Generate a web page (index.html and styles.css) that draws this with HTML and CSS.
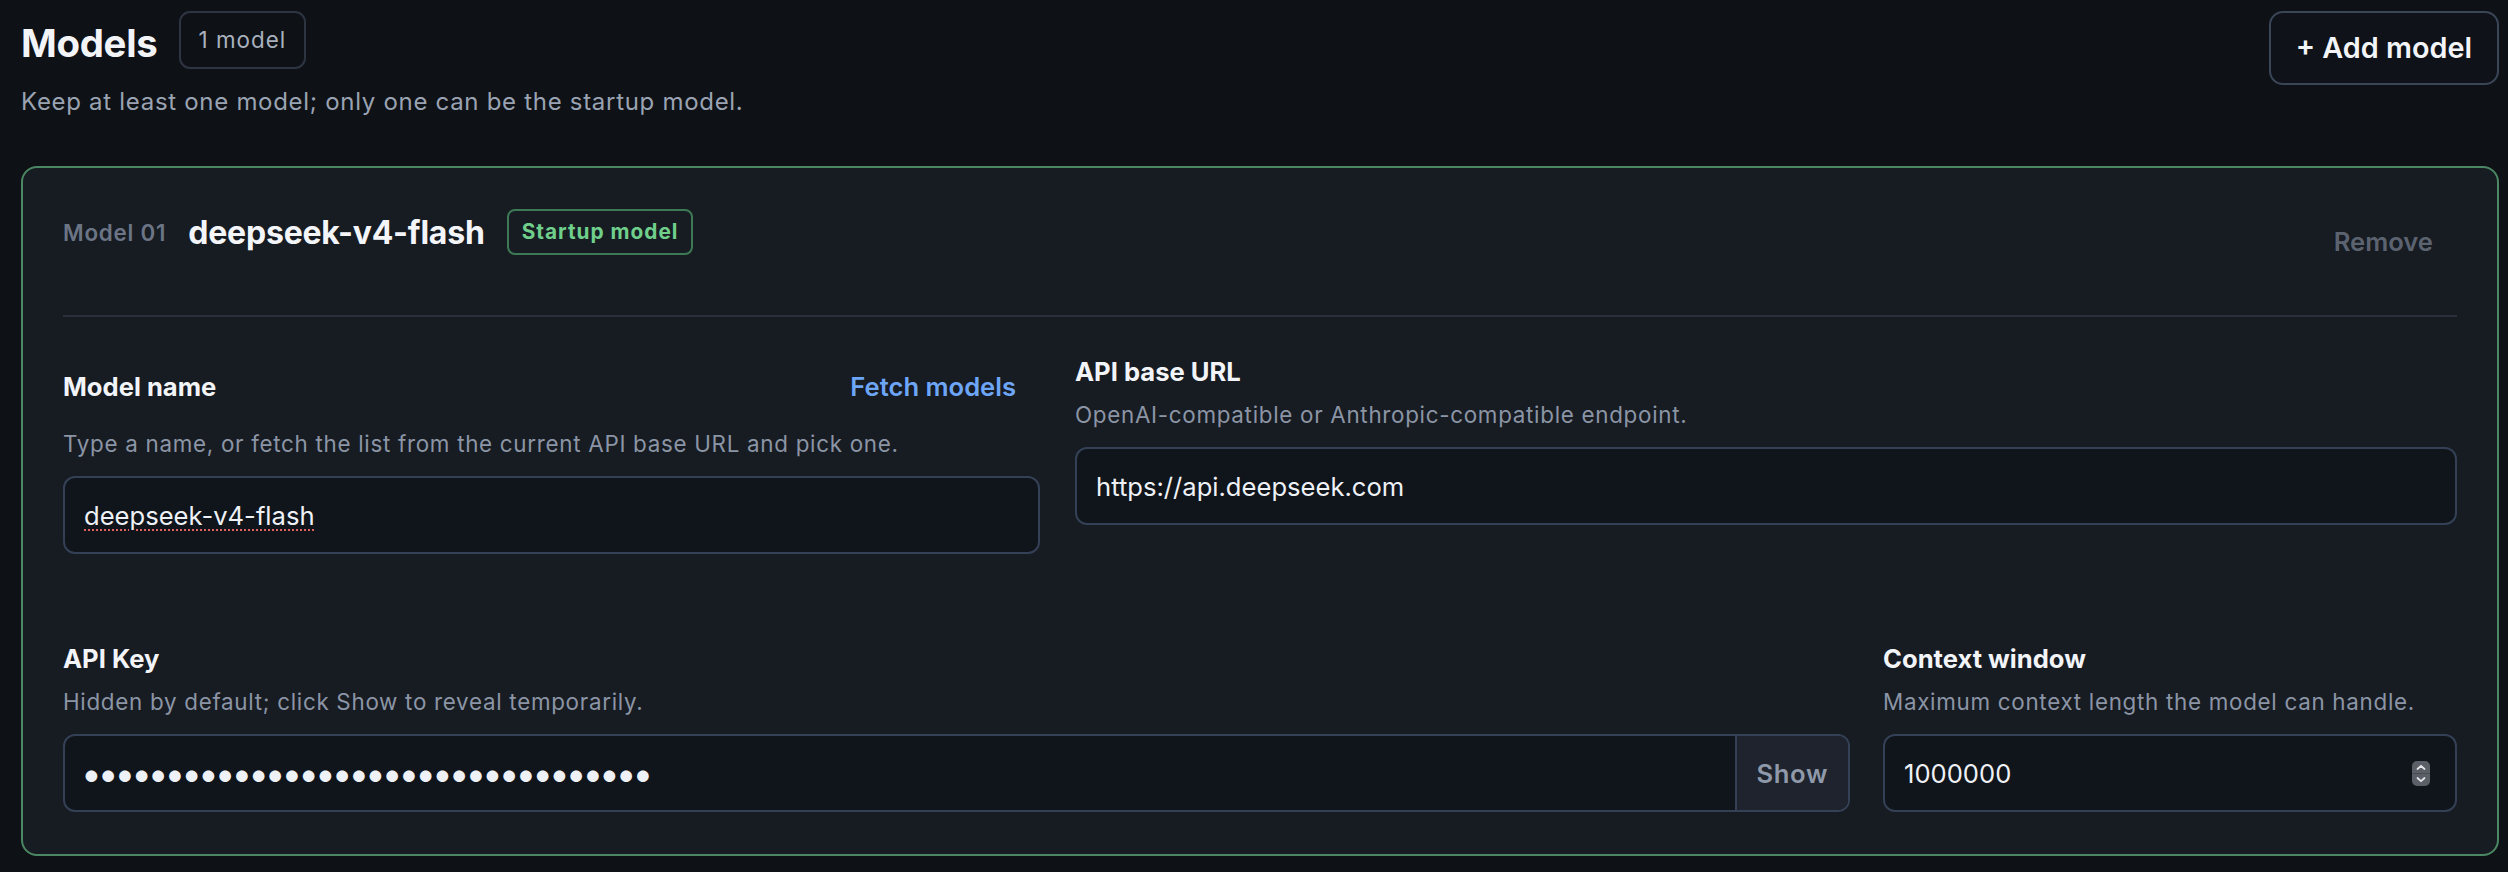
FILE: index.html
```html
<!DOCTYPE html>
<html lang="en">
<head>
    <meta charset="UTF-8">
    <meta name="viewport" content="width=device-width, initial-scale=1.0">
    <title>Models</title>
    <link rel="stylesheet" href="styles.css">
</head>
<body>
    <header class="page-head">
        <div>
            <div class="title-row">
                <h1 class="page-title">Models</h1>
                <span class="count">1 model</span>
            </div>
            <p class="subtitle">Keep at least one model; only one can be the startup model.</p>
        </div>
        <button class="btn-add" type="button">+ Add model</button>
    </header>

    <section class="card">
        <div class="card-head">
            <div class="card-title">
                <span class="card-index">Model 01</span>
                <h2 class="model-name">deepseek-v4-flash</h2>
                <span class="startup">Startup model</span>
            </div>
            <button class="btn-remove" type="button">Remove</button>
        </div>

        <div class="grid grid-top">
            <div class="field">
                <div class="label-row">
                    <label class="label">Model name</label>
                    <button class="btn-fetch" type="button">Fetch models</button>
                </div>
                <p class="help">Type a name, or fetch the list from the current API base URL and pick one.</p>
                <input class="input spelled" type="text" value="deepseek-v4-flash">
            </div>
            <div class="field">
                <label class="label">API base URL</label>
                <p class="help">OpenAI-compatible or Anthropic-compatible endpoint.</p>
                <input class="input" type="text" value="https://api.deepseek.com">
            </div>
        </div>

        <div class="grid grid-bottom">
            <div class="field">
                <label class="label">API Key</label>
                <p class="help">Hidden by default; click Show to reveal temporarily.</p>
                <div class="input-group">
                    <input class="input-bare secret" type="password" value="sk-0000000000000000000000000000000">
                    <button class="btn-show" type="button">Show</button>
                </div>
            </div>
            <div class="field">
                <label class="label">Context window</label>
                <p class="help">Maximum context length the model can handle.</p>
                <div class="input-group num">
                    <input class="input-bare" type="number" value="1000000">
                    <span class="stepper">
                        <svg width="18" height="25" viewBox="0 0 18 25">
                            <rect x="0" y="0" width="18" height="25" rx="5" fill="#5b5f67"/>
                            <line x1="0" y1="12.5" x2="18" y2="12.5" stroke="#484c53" stroke-width="1"/>
                            <path d="M5.5 8 L9 4.8 L12.5 8" fill="none" stroke="#e4e6ea" stroke-width="1.8" stroke-linecap="round" stroke-linejoin="round"/>
                            <path d="M5.5 17 L9 20.2 L12.5 17" fill="none" stroke="#e4e6ea" stroke-width="1.8" stroke-linecap="round" stroke-linejoin="round"/>
                        </svg>
                    </span>
                </div>
            </div>
        </div>
    </section>
</body>
</html>
```

FILE: styles.css
```css
* {
    margin: 0;
    padding: 0;
    box-sizing: border-box;
}
body {
    font-family: Inter, "Noto Sans", sans-serif;
    background-color: #0e1116;
    color: #eef1f6;
    padding: 11px 9px 0 21px;
}
button, input {
    font-family: inherit;
}

.page-head {
    display: flex;
    justify-content: space-between;
    align-items: flex-start;
}
.title-row {
    display: flex;
    align-items: flex-start;
    gap: 21px;
}
.page-title {
    font-size: 38.4px;
    line-height: 64px;
    font-weight: 700;
    color: #f2f4f8;
    letter-spacing: -0.3px;
}
.count {
    border: 2px solid #2e3542;
    border-radius: 11px;
    padding: 0 18px;
    line-height: 54px;
    font-size: 22.4px;
    letter-spacing: 1px;
    color: #a9b1be;
}
.subtitle {
    margin-top: 9px;
    font-size: 24px;
    line-height: 36px;
    letter-spacing: 0.7px;
    color: #9aa3b2;
}
.btn-add {
    background: #0f1218;
    border: 2px solid #3a4558;
    border-radius: 14px;
    color: #f2f4f8;
    font-size: 28.8px;
    font-weight: 600;
    line-height: 70px;
    padding: 0 25px;
}

.card {
    margin-top: 46px;
    background-color: #171b22;
    border: 2px solid #4a8762;
    border-radius: 16px;
    padding: 41px 40px 42px 40px;
}
.card-head {
    display: flex;
    justify-content: space-between;
    align-items: flex-start;
    padding-bottom: 40px;
    border-bottom: 2px solid #2a303a;
}
.card-title {
    display: flex;
    align-items: center;
    gap: 22px;
    height: 46px;
}
.card-index {
    font-size: 22.4px;
    font-weight: 600;
    letter-spacing: 0.75px;
    color: #6b7585;
}
.model-name {
    font-size: 32px;
    font-weight: 700;
    color: #f3f5f9;
    letter-spacing: -0.2px;
}
.startup {
    border: 2px solid #3d7955;
    border-radius: 8px;
    padding: 0 13px;
    line-height: 42px;
    font-size: 20.8px;
    font-weight: 700;
    letter-spacing: 1px;
    color: #6fcf8b;
}
.btn-remove {
    background: none;
    border: none;
    color: #5c6370;
    font-size: 25.6px;
    font-weight: 600;
    line-height: 38.4px;
    padding: 14px 24px;
}

.grid {
    display: grid;
}
.grid-top {
    margin-top: 36px;
    grid-template-columns: 977px 1fr;
    column-gap: 35px;
    align-items: start;
}
.grid-bottom {
    margin-top: 86px;
    grid-template-columns: 1fr 574px;
    column-gap: 33px;
    align-items: start;
}

.label-row {
    display: flex;
    justify-content: space-between;
    align-items: center;
}
.label {
    display: block;
    font-size: 25.6px;
    line-height: 38.4px;
    font-weight: 700;
    color: #f2f4f8;
}
.btn-fetch {
    background: none;
    border: none;
    color: #6ea6f7;
    font-size: 25.6px;
    font-weight: 600;
    line-height: 38.4px;
    padding: 14.5px 24px;
}
.help {
    margin: 6px 0 16px;
    font-size: 22.4px;
    line-height: 33.6px;
    letter-spacing: 0.7px;
    color: #8b95a5;
}

.input {
    display: block;
    width: 100%;
    height: 78px;
    background-color: #10141b;
    border: 2px solid #334055;
    border-radius: 12px;
    padding: 0 19px;
    font-size: 25.6px;
    color: #eef1f6;
    outline: none;
}
.spelled {
    text-decoration: underline dotted #e0605e;
    text-decoration-thickness: 2px;
    text-underline-offset: 5px;
}

.input-group {
    display: flex;
    align-items: stretch;
    height: 78px;
    background-color: #10141b;
    border: 2px solid #334055;
    border-radius: 12px;
    overflow: hidden;
}
.input-bare {
    flex: 1;
    min-width: 0;
    background: transparent;
    border: none;
    outline: none;
    padding: 0 19px;
    font-size: 25.6px;
    color: #eef1f6;
}
.secret {
    padding-left: 16px;
    font-size: 37px;
    letter-spacing: -4.1px;
}
.btn-show {
    background-color: #1e232d;
    border: none;
    border-left: 2px solid #334055;
    color: #8f99aa;
    font-size: 25.6px;
    font-weight: 600;
    letter-spacing: 0.6px;
    padding: 0 20px;
}

.num {
    align-items: center;
    padding-right: 25px;
}
.num .input-bare {
    align-self: stretch;
}
.num input::-webkit-inner-spin-button,
.num input::-webkit-outer-spin-button {
    -webkit-appearance: none;
    margin: 0;
}
.stepper {
    display: flex;
}
```
